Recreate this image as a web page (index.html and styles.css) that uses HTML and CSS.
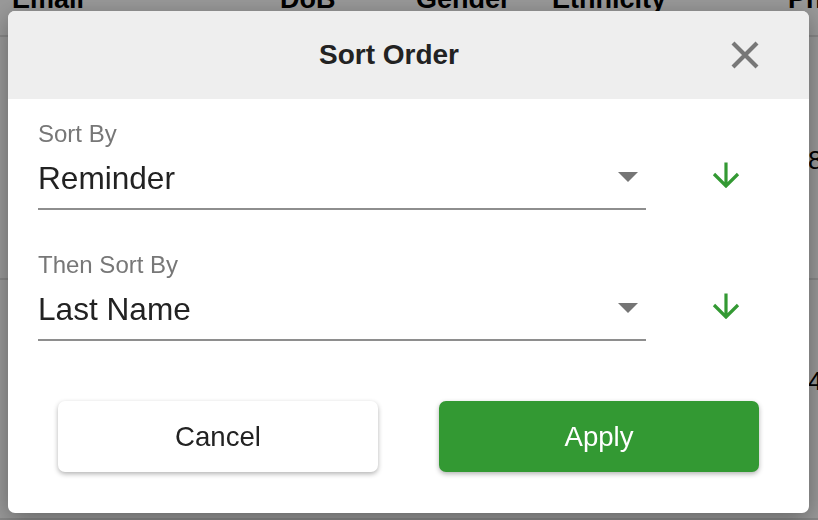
FILE: index.html
```html
<!DOCTYPE html>
<html lang="en">
<head>
<meta charset="utf-8">
<title>Sort Order</title>
<link rel="stylesheet" href="styles.css">
</head>
<body>
<div class="page">
  <div class="thead">
    <span>Email</span><span>DoB</span><span>Gender</span><span>Ethnicity</span><span>Phone</span>
  </div>
  <div class="trow first"><span></span><span></span><span></span><span></span><span class="num">8</span></div>
  <div class="trow second"><span></span><span></span><span></span><span></span><span class="num">4</span></div>
</div>
<div class="overlay"></div>
<div class="dialog">
  <div class="dlg-head">
    <h2 class="dlg-title">Sort Order</h2>
    <button class="close" aria-label="Close">
      <svg width="30" height="30" viewBox="0 0 30 30"><path d="M3 3L27 27M27 3L3 27" stroke="#777" stroke-width="4.2" fill="none"/></svg>
    </button>
  </div>
  <div class="dlg-body">
    <div class="field-row">
      <div class="field">
        <div class="label">Sort By</div>
        <div class="select"><span class="value">Reminder</span><span class="caret"></span></div>
      </div>
      <button class="dir" aria-label="Descending">
        <svg width="28" height="27" viewBox="0 0 28 27"><path d="M14 1.5V25M2 13L14 25L26 13" stroke="#339933" stroke-width="3.2" fill="none"/></svg>
      </button>
    </div>
    <div class="field-row second">
      <div class="field">
        <div class="label">Then Sort By</div>
        <div class="select"><span class="value">Last Name</span><span class="caret"></span></div>
      </div>
      <button class="dir" aria-label="Descending">
        <svg width="28" height="27" viewBox="0 0 28 27"><path d="M14 1.5V25M2 13L14 25L26 13" stroke="#339933" stroke-width="3.2" fill="none"/></svg>
      </button>
    </div>
    <div class="actions">
      <button class="btn cancel">Cancel</button>
      <button class="btn apply">Apply</button>
    </div>
  </div>
</div>
</body>
</html>
```
FILE: styles.css
```css
* { box-sizing: border-box; }
html, body { margin: 0; padding: 0; }
body {
  width: 818px;
  height: 520px;
  overflow: hidden;
  background: #fff;
  font-family: "Liberation Sans", Arial, sans-serif;
}
.page {
  color: #000;
}
.thead, .trow {
  display: grid;
  grid-template-columns: 268px 136px 136px 236px 1fr;
  padding-left: 12px;
}
.thead {
  margin-top: -14px;
  font-weight: bold;
  font-size: 27px;
  line-height: 27px;
  height: 51px;
  white-space: nowrap;
  border-bottom: 2px solid #e2e2e2;
}
.trow {
  font-size: 26px;
  line-height: 26px;
  border-bottom: 2px solid #e2e2e2;
}
.trow .num { padding-left: 20px; }
.trow.first { height: 243px; padding-top: 110px; }
.trow.second { height: 240px; padding-top: 88px; }
.overlay {
  position: fixed;
  inset: 0;
  background: rgba(0,0,0,0.4);
}
.dialog {
  position: fixed;
  left: 8px;
  top: 11px;
  width: 801px;
  height: 502px;
  background: #fff;
  border-radius: 7px;
  overflow: hidden;
  box-shadow: 0 6px 24px rgba(0,0,0,0.35);
  display: flex;
  flex-direction: column;
}
.dlg-head {
  position: relative;
  height: 88px;
  background: #eeeeee;
  display: flex;
  align-items: center;
  justify-content: center;
  padding-right: 39px;
}
.dlg-title {
  margin: 0;
  font-size: 28px;
  font-weight: bold;
  color: #222;
}
.close {
  position: absolute;
  right: 49px;
  top: 29px;
  width: 30px;
  height: 30px;
  padding: 0;
  border: 0;
  background: none;
  display: flex;
}
.dlg-body {
  padding: 21px 0 0 30px;
  display: flex;
  flex-direction: column;
}
.field-row {
  display: flex;
  align-items: flex-end;
}
.field-row.second { margin-top: 41px; }
.field {
  width: 608px;
}
.label {
  font-size: 24px;
  line-height: 28px;
  color: #777;
}
.select {
  margin-top: 12px;
  padding-bottom: 12px;
  border-bottom: 2px solid #8e8e8e;
  display: flex;
  align-items: center;
  justify-content: space-between;
  padding-right: 8px;
}
.value {
  font-size: 31.6px;
  line-height: 36px;
  color: #222;
}
.caret {
  width: 0;
  height: 0;
  border-left: 10px solid transparent;
  border-right: 10px solid transparent;
  border-top: 10px solid #757575;
  margin-top: -2px;
}
.dir {
  width: 160px;
  height: 27px;
  margin-bottom: 22px;
  padding: 0;
  border: 0;
  background: none;
  display: flex;
  justify-content: center;
}
.actions {
  margin-top: 60px;
  padding: 0 50px 0 20px;
  display: flex;
  justify-content: space-between;
}
.btn {
  width: 320px;
  height: 71px;
  border: 0;
  border-radius: 7px;
  font-family: "Liberation Sans", Arial, sans-serif;
  font-size: 27.6px;
  box-shadow: 0 2px 5px rgba(0,0,0,0.3);
}
.cancel { background: #fff; color: #222; }
.apply { background: #339933; color: #fff; }
```
